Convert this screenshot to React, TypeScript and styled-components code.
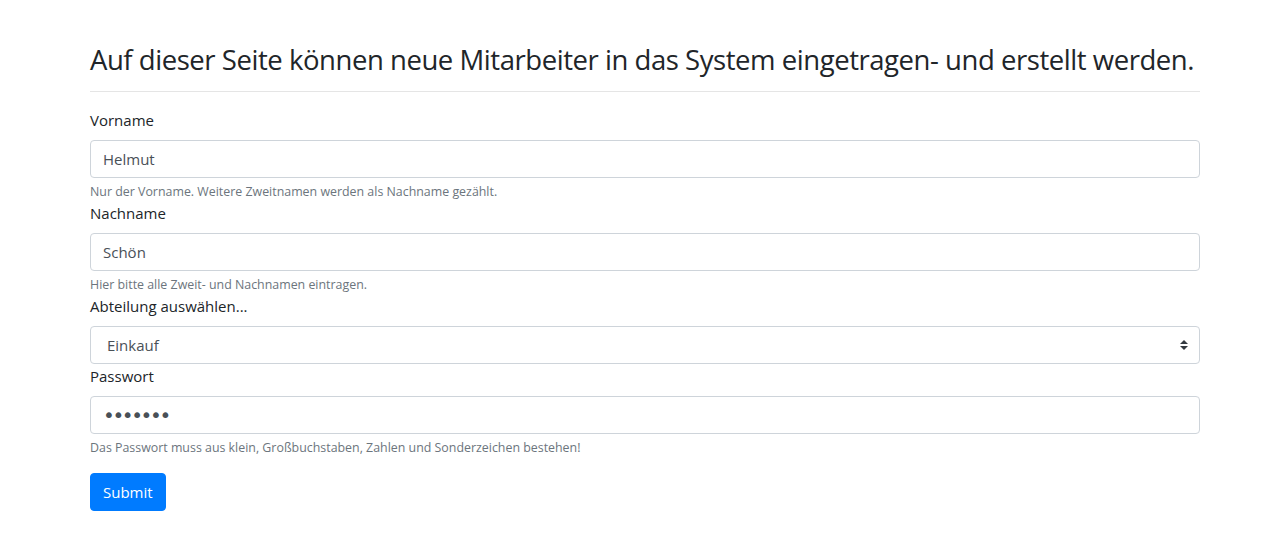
import React from "react";
import styled, { createGlobalStyle } from "styled-components";

const Global = createGlobalStyle`
  html, body { margin: 0; padding: 0; background: #fff; }
  body {
    font-family: "Segoe UI", "Open Sans", "Noto Sans", sans-serif;
    font-size: 15px;
    line-height: 1.5;
    color: #212529;
  }
  * { box-sizing: border-box; }
`;

const Container = styled.div`
  width: 1110px;
  margin-left: 90px;
  padding-top: 40px;
`;

const Heading = styled.h2`
  margin: 0;
  font-size: 27.5px;
  letter-spacing: -0.45px;
  font-weight: 400;
  line-height: 40px;
  color: #212529;
  white-space: nowrap;
`;

const Rule = styled.hr`
  margin: 11px 0 16px;
  border: 0;
  border-top: 1px solid rgba(0, 0, 0, 0.1);
`;

const Form = styled.form`
  display: flex;
  flex-direction: column;
`;

const Group = styled.div`
  display: flex;
  flex-direction: column;
`;

const Label = styled.label`
  display: block;
  margin-bottom: 8px;
  line-height: 24px;
  font-size: 15px;
`;

const Input = styled.input<{ $secret?: boolean }>`
  display: block;
  width: 100%;
  height: 38px;
  padding: 6px 12px;
  font-family: ${(p) => (p.$secret ? '"DejaVu Sans", sans-serif' : "inherit")};
  font-size: ${(p) => (p.$secret ? "20px" : "15px")};
  letter-spacing: ${(p) => (p.$secret ? "-2.4px" : "normal")};
  color: #495057;
  background: #fff;
  border: 1px solid #ced4da;
  border-radius: 4px;
  outline: none;
`;

const SelectWrap = styled.div`
  position: relative;
`;

const Select = styled.select`
  display: block;
  width: 100%;
  height: 38px;
  padding: 6px 28px 6px 16px;
  font: inherit;
  font-size: 15px;
  color: #495057;
  background: #fff;
  border: 1px solid #ced4da;
  border-radius: 4px;
  appearance: none;
  outline: none;
`;

const Arrow = styled.svg`
  position: absolute;
  right: 12px;
  top: 14px;
  pointer-events: none;
`;

const Help = styled.small`
  display: block;
  margin-top: 4px;
  font-size: 12.4px;
  line-height: 19px;
  color: #6c757d;
`;

const Button = styled.button`
  align-self: flex-start;
  margin-top: 16px;
  height: 38px;
  padding: 6px 12px;
  font: inherit;
  font-size: 15px;
  color: #fff;
  background: #007bff;
  border: 1px solid #007bff;
  border-radius: 4px;
`;

export default function App() {
  return (
    <>
      <Global />
      <Container>
        <Heading>Auf dieser Seite können neue Mitarbeiter in das System eingetragen- und erstellt werden.</Heading>
        <Rule />
        <Form onSubmit={(e) => e.preventDefault()}>
          <Group>
            <Label>Vorname</Label>
            <Input type="text" defaultValue="Helmut" />
            <Help>Nur der Vorname. Weitere Zweitnamen werden als Nachname gezählt.</Help>
          </Group>
          <Group>
            <Label>Nachname</Label>
            <Input type="text" defaultValue="Schön" />
            <Help>Hier bitte alle Zweit- und Nachnamen eintragen.</Help>
          </Group>
          <Group>
            <Label>Abteilung auswählen...</Label>
            <SelectWrap>
              <Select defaultValue="Einkauf">
                <option>Einkauf</option>
                <option>Verkauf</option>
                <option>Personal</option>
              </Select>
              <Arrow width="8" height="10" viewBox="0 0 4 5">
                <path fill="#343a40" d="M2 0L0 2h4zm0 5L0 3h4z" />
              </Arrow>
            </SelectWrap>
          </Group>
          <Group>
            <Label>Passwort</Label>
            <Input $secret type="password" defaultValue="geheim1" />
            <Help>Das Passwort muss aus klein, Großbuchstaben, Zahlen und Sonderzeichen bestehen!</Help>
          </Group>
          <Button type="submit">Submit</Button>
        </Form>
      </Container>
    </>
  );
}
